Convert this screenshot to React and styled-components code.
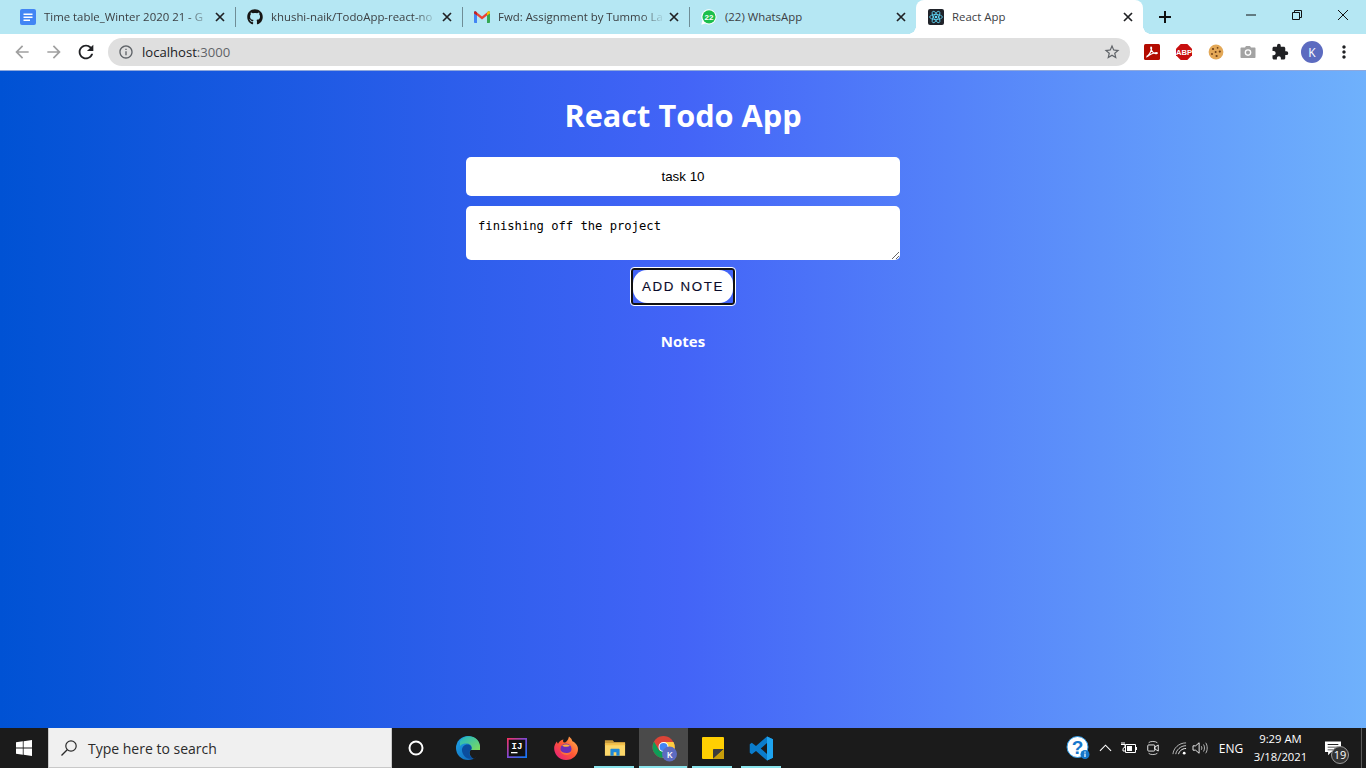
import React from "react";
import styled, { createGlobalStyle } from "styled-components";
import { FaGithub } from "react-icons/fa";
import { MdArrowBack, MdArrowForward, MdRefresh, MdInfoOutline, MdStarBorder, MdExtension, MdMoreVert } from "react-icons/md";

const Global = createGlobalStyle`
  html, body { margin: 0; padding: 0; height: 100%; overflow: hidden; }
  * { box-sizing: border-box; }
  body { font-family: "Open Sans", "Noto Sans", sans-serif; }
`;

const Page = styled.div`
  display: flex;
  flex-direction: column;
  width: 1366px;
  height: 768px;
  overflow: hidden;
`;

/* ---------- browser chrome ---------- */
const TabStrip = styled.div`
  display: flex;
  align-items: stretch;
  height: 34px;
  padding-left: 8px;
  background: #b5e7f3;
`;
const Tab = styled.div`
  position: relative;
  display: flex;
  align-items: center;
  gap: 8px;
  width: 227px;
  padding: 0 10px 0 12px;
  background: ${(p) => (p.$active ? "#ffffff" : "transparent")};
  border-radius: ${(p) => (p.$active ? "8px 8px 0 0" : "0")};
  &::after {
    content: "";
    display: ${(p) => (p.$sep ? "block" : "none")};
    position: absolute;
    right: -1px;
    top: 7px;
    width: 1px;
    height: 20px;
    background: #6f8d96;
  }
  ${(p) =>
    p.$active &&
    `
    &::before {
      content: "";
      position: absolute;
      left: -8px;
      bottom: 0;
      width: 8px;
      height: 8px;
      background: radial-gradient(circle 8px at 0 0, #b5e7f3 97%, #fff 100%);
    }
    &::after {
      display: block;
      top: auto;
      bottom: 0;
      right: -8px;
      width: 8px;
      height: 8px;
      background: radial-gradient(circle 8px at 8px 0, #b5e7f3 97%, #fff 100%);
    }
  `}
`;
const TabIcon = styled.span`
  display: flex;
  flex: none;
  width: 16px;
  height: 16px;
`;
const TabTitle = styled.span`
  flex: 1;
  min-width: 0;
  overflow: hidden;
  white-space: nowrap;
  font-size: 11.4px;
  line-height: 16px;
  color: #3c4043;
  ${(p) =>
    p.$fade &&
    `
    -webkit-mask-image: linear-gradient(to right, #000 calc(100% - 24px), transparent 100%);
    mask-image: linear-gradient(to right, #000 calc(100% - 24px), transparent 100%);
  `}
`;
const CloseGlyph = styled.svg`
  flex: none;
  width: 10px;
  height: 10px;
  margin-left: -4px;
`;
const NewTab = styled.div`
  display: flex;
  align-items: center;
  justify-content: center;
  width: 28px;
  margin-left: 8px;
`;
const Spacer = styled.div`
  flex: 1;
`;
const WindowButton = styled.div`
  display: flex;
  align-items: center;
  justify-content: center;
  width: 46px;
  height: 30px;
`;

const Toolbar = styled.div`
  display: flex;
  align-items: center;
  height: 36px;
  padding: 0 6px;
  background: #ffffff;
`;
const ToolButton = styled.div`
  display: flex;
  align-items: center;
  justify-content: center;
  flex: none;
  width: 32px;
  height: 28px;
  color: ${(p) => p.$color || "#202124"};
  font-size: ${(p) => p.$size || 20}px;
`;
const Omnibox = styled.div`
  display: flex;
  align-items: center;
  flex: 1;
  height: 28px;
  margin: 0 6px;
  padding: 0 9px 0 10px;
  border-radius: 14px;
  background: #dfdfdf;
`;
const Url = styled.span`
  flex: 1;
  margin-left: 8px;
  font-size: 13.1px;
  line-height: 20px;
  color: #202124;
  span {
    color: #5f6368;
  }
`;
const Avatar = styled.div`
  display: flex;
  align-items: center;
  justify-content: center;
  width: 22px;
  height: 22px;
  border-radius: 50%;
  background: #5c6bc0;
  color: #ffffff;
  font-size: 12px;
`;

/* ---------- app ---------- */
const Main = styled.main`
  display: flex;
  flex-direction: column;
  align-items: center;
  flex: 1;
  padding-top: 22px;
  border-top: 1px solid #8fa8dc;
  background: linear-gradient(to right, #0052d4, #4364f7, #6fb1fc);
`;
const Title = styled.h1`
  margin: 0 0 20px;
  font-size: 30.7px;
  line-height: 44px;
  font-weight: 700;
  color: #ffffff;
`;
const TitleInput = styled.input`
  display: block;
  width: 434px;
  height: 39px;
  padding: 0 12px;
  border: none;
  border-radius: 5px;
  outline: none;
  background: #ffffff;
  color: #000000;
  text-align: center;
  font-family: "Liberation Sans", Arial, sans-serif;
  font-size: 13.33px;
`;
const NoteArea = styled.textarea`
  display: block;
  width: 434px;
  height: 54px;
  margin-top: 10px;
  padding: 13px 12px 12px;
  border: none;
  border-radius: 5px;
  outline: none;
  background: #ffffff;
  color: #000000;
  font-family: "DejaVu Sans Mono", monospace;
  font-size: 12.17px;
  line-height: 15px;
`;
const FocusRing = styled.div`
  width: 106px;
  height: 39px;
  margin-top: 7px;
  padding: 2px;
  border: 1px solid #ffffff;
  border-radius: 4px;
  box-shadow: inset 0 0 0 2px #111111;
  background: #4364f7;
`;
const AddButton = styled.button`
  display: block;
  width: 100%;
  height: 100%;
  border: none;
  border-radius: 14px;
  background: #ffffff;
  color: #0a0a2a;
  font-family: "Liberation Sans", Arial, sans-serif;
  font-size: 13.33px;
  letter-spacing: 1.65px;
  -webkit-text-stroke: 0.15px #0a0a2a;
  padding: 0;
`;
const NotesHeading = styled.h2`
  margin: 25px 0 0;
  font-size: 15px;
  line-height: 20px;
  font-weight: 700;
  color: #ffffff;
`;

/* ---------- taskbar ---------- */
const Taskbar = styled.footer`
  display: flex;
  align-items: stretch;
  height: 40px;
  background: #1b1b1b;
`;
const StartButton = styled.div`
  display: flex;
  align-items: center;
  justify-content: center;
  width: 48px;
`;
const SearchBox = styled.div`
  display: flex;
  align-items: center;
  width: 344px;
  padding-left: 11px;
  background: #f0f0f0;
  border: 1px solid #c8c8c8;
  border-width: 0 1px 1px 1px;
  font-size: 14px;
  color: #2b2b2b;
  span {
    margin-left: 10px;
    padding-top: 2px;
  }
`;
const CortanaSlot = styled.div`
  display: flex;
  align-items: center;
  justify-content: center;
  width: 48px;
  margin-right: 3px;
`;
const AppSlot = styled.div`
  position: relative;
  display: flex;
  align-items: center;
  justify-content: center;
  width: 49px;
  background: ${(p) => (p.$focused ? "#4a4a4a" : "transparent")};
  &::after {
    content: "";
    display: ${(p) => (p.$running ? "block" : "none")};
    position: absolute;
    bottom: 0;
    left: ${(p) => (p.$focused ? "0" : "4px")};
    right: ${(p) => (p.$focused ? "1px" : "5px")};
    height: 2px;
    background: #8ae4ec;
  }
`;
const Tray = styled.div`
  display: flex;
  align-items: stretch;
  margin-right: 4px;
  color: #ffffff;
`;
const TraySlot = styled.div`
  position: relative;
  display: flex;
  align-items: center;
  justify-content: center;
  width: ${(p) => p.$w}px;
  font-size: 12px;
`;
const Clock = styled.div`
  font-size: 11.3px;
  line-height: 18px;
  text-align: center;
  white-space: nowrap;
`;
const Badge = styled.span`
  position: absolute;
  left: 23px;
  top: 18px;
  width: 18px;
  height: 18px;
  border-radius: 50%;
  border: 1px solid #9a9a9a;
  background: #333333;
  color: #ffffff;
  font-size: 11px;
  line-height: 16px;
  text-align: center;
`;
const DesktopEdge = styled.div`
  width: 1px;
  margin-left: 3px;
  background: #5a5a5a;
`;

const Close = ({ color = "#202124" }) => (
  <CloseGlyph viewBox="0 0 10 10">
    <path d="M1 1 9 9M9 1 1 9" stroke={color} strokeWidth="1.7" fill="none" />
  </CloseGlyph>
);

const DocsIcon = () => (
  <svg viewBox="0 0 16 16" width="16" height="16">
    <rect x="0" y="0" width="16" height="16" rx="2" fill="#4285f4" />
    <path d="M3.5 4.5h9v1.5h-9zM3.5 7.5h9V9h-9zM3.5 10.5h6.5V12H3.5z" fill="#fff" />
  </svg>
);
const GmailIcon = () => (
  <svg viewBox="0 0 16 16" width="16" height="16">
    <path d="M0 3.5 C0 2.4 1.2 1.9 2 2.6L3 3.4V14H1C.4 14 0 13.6 0 13z" fill="#4285f4" />
    <path d="M16 3.5 C16 2.4 14.8 1.9 14 2.6L13 3.4V14h2c.6 0 1-.4 1-1z" fill="#34a853" />
    <path d="M3 3.4 8 7.4 13 3.4V6.6L8 10.5 3 6.6z" fill="#ea4335" />
    <path d="M13 3.4 14 2.6C14.8 1.9 16 2.4 16 3.5V4.5L13 6.6z" fill="#fbbc04" />
    <path d="M0 3.5C0 2.4 1.2 1.9 2 2.6L3 3.4V6.6L0 4.5z" fill="#c5221f" />
  </svg>
);
const WhatsIcon = () => (
  <svg viewBox="0 0 16 16" width="16" height="16">
    <path d="M8 .2a7.6 7.6 0 0 0-6.6 11.4L.3 15.7l4.2-1.1A7.6 7.6 0 1 0 8 .2z" fill="#fff" />
    <circle cx="8" cy="7.8" r="6.6" fill="#1cbf4c" />
    <text x="8" y="10.6" textAnchor="middle" fontFamily="Liberation Sans" fontWeight="700" fontSize="8" fill="#fff">22</text>
  </svg>
);
const ReactIcon = () => (
  <svg viewBox="0 0 16 16" width="16" height="16">
    <rect width="16" height="16" rx="2" fill="#20232a" />
    <g fill="none" stroke="#61dafb" strokeWidth=".8">
      <ellipse cx="8" cy="8" rx="6.4" ry="2.5" />
      <ellipse cx="8" cy="8" rx="6.4" ry="2.5" transform="rotate(60 8 8)" />
      <ellipse cx="8" cy="8" rx="6.4" ry="2.5" transform="rotate(120 8 8)" />
    </g>
    <circle cx="8" cy="8" r="1.3" fill="#61dafb" />
  </svg>
);
const AcrobatIcon = () => (
  <svg viewBox="0 0 16 16" width="16" height="16">
    <rect width="16" height="16" rx="1.5" fill="#b30b00" />
    <path d="M2.6 12.6C4.6 11.5 6.6 8.3 7.4 5.5 7.9 3.4 7.2 2.6 6.8 3.2 6.2 4.6 8.6 8.6 10.3 9.3 11.6 9.9 13.6 9.6 13.3 8.9 12.8 8 8 9.2 5 11.2 3.6 12.1 2.6 13 3 13.2"
      fill="none" stroke="#fff" strokeWidth="1.2" />
  </svg>
);
const AbpIcon = () => (
  <svg viewBox="0 0 16 16" width="16" height="16">
    <path d="M4.7 0h6.6L16 4.7v6.6L11.3 16H4.7L0 11.3V4.7z" fill="#c80f0f" />
    <text x="8" y="10.8" textAnchor="middle" fontFamily="Liberation Sans" fontWeight="700" fontSize="7.6" fill="#fff">ABP</text>
  </svg>
);
const CookieIcon = () => (
  <svg viewBox="0 0 16 16" width="16" height="16">
    <circle cx="8" cy="8" r="7.4" fill="#e3a857" />
    <g fill="#6b3d16">
      <circle cx="5" cy="5" r="1.1" /><circle cx="9.6" cy="3.8" r=".9" /><circle cx="11.8" cy="7.6" r="1.1" />
      <circle cx="7.6" cy="8" r="1" /><circle cx="4" cy="10" r=".9" /><circle cx="8.6" cy="12" r="1.1" />
    </g>
  </svg>
);
const CameraIcon = () => (
  <svg viewBox="0 0 16 16" width="16" height="16">
    <path d="M1.5 3.5H5L6 2h4l1 1.5h3.5c.6 0 1 .4 1 1v8.5c0 .6-.4 1-1 1h-13c-.6 0-1-.4-1-1V4.500c0-.6.4-1 1-1z" fill="#a3a3a3" />
    <circle cx="8" cy="8.600" r="3.300" fill="#fff" />
    <circle cx="8" cy="8.600" r="2" fill="#a3a3a3" />
  </svg>
);
const WinLogo = () => (
  <svg viewBox="0 0 16 16" width="16" height="16">
    <path d="M0 2.300 6.800 1.300V7.600H0zM7.600 1.200 16 0V7.600H7.600zM0 8.400H6.800V14.700L0 13.700zM7.600 8.400H16V16L7.600 14.800z" fill="#fff" />
  </svg>
);
const SearchGlyph = () => (
  <svg viewBox="0 0 18 18" width="18" height="18">
    <circle cx="11" cy="7" r="5.200" fill="none" stroke="#2b2b2b" strokeWidth="1.200" />
    <path d="M7.200 10.800 1.500 16.500" stroke="#2b2b2b" strokeWidth="1.300" />
  </svg>
);
const Cortana = () => (
  <svg viewBox="0 0 16 16" width="16" height="16">
    <circle cx="8" cy="8" r="6.500" fill="none" stroke="#fff" strokeWidth="2" />
  </svg>
);
const EdgeIcon = () => (
  <svg viewBox="0 0 24 24" width="24" height="24">
    <defs>
      <linearGradient id="edgeA" x1="0" y1="0" x2="1" y2="1">
        <stop offset="0" stopColor="#1fb6c9" /><stop offset="1" stopColor="#7fdc5a" />
      </linearGradient>
      <linearGradient id="edgeB" x1="0" y1="0" x2="1" y2="1">
        <stop offset="0" stopColor="#1fa6e8" /><stop offset="1" stopColor="#0d5cb4" />
      </linearGradient>
    </defs>
    <circle cx="12" cy="12" r="12" fill="url(#edgeB)" />
    <path d="M4 5C7.500 -.5 16 -1.500 21 3.500 24 6.500 24.500 11 24 14H15C17 10.500 14.500 7.500 10.500 7.500 8 7.500 5.500 8 4 10z" fill="url(#edgeA)" />
    <path d="M6 15C5.500 10 10 7.500 13.500 9 16 10.300 16 13 15 14 12 16 13 20 17 22.500 11 24 7 20 6 15z" fill="#0b4d9e" />
    <path d="M15 14H24.200C24 18 21.500 21.500 17.500 22.800 13.500 20.500 12.500 16 15 14z" fill="#1b1b1b" />
  </svg>
);
const IdeaIcon = () => (
  <svg viewBox="0 0 20 20" width="20" height="20">
    <defs>
      <linearGradient id="ideaG" x1="0" y1="0" x2="1" y2="1">
        <stop offset="0" stopColor="#fe315d" /><stop offset=".5" stopColor="#7c4ad6" /><stop offset="1" stopColor="#087cfa" />
      </linearGradient>
    </defs>
    <rect width="20" height="20" fill="url(#ideaG)" />
    <rect x="1.700" y="1.700" width="16.600" height="16.600" fill="#111" />
    <text x="10" y="11" textAnchor="middle" fontFamily="Liberation Mono" fontWeight="700" fontSize="9" fill="#fff">IJ</text>
    <rect x="4" y="14" width="6.500" height="1.300" fill="#fff" />
  </svg>
);
const FirefoxIcon = () => (
  <svg viewBox="0 0 24 24" width="24" height="24">
    <defs>
      <linearGradient id="ffG" x1="0" y1="1" x2="1" y2="0">
        <stop offset="0" stopColor="#e31587" /><stop offset=".5" stopColor="#ff5634" /><stop offset="1" stopColor="#ffbd4f" />
      </linearGradient>
    </defs>
    <path d="M12 24A11.800 11.800 0 0 1 .3 10.500C1 8 2 6.500 3 5.500c0 1 .3 1.800 1 2.300C5 5.500 7 3.800 9.500 3.500c-.8 1.300-.5 2.500.5 3C11.500 7 14 5 15 .5c2 1.500 3 3 3.300 4.800C20 6 24 8.500 24 13c0 6-5 11-12 11z" fill="url(#ffG)" />
    <circle cx="12" cy="13" r="5.500" fill="#6b2fb8" />
    <path d="M8 9.500c2-1.500 6-1.500 8 0-1 1.200-2.500 1-4 1.300-1.200.2-2.500-.1-4-1.300z" fill="#ffb03a" />
    <path d="M6 14c1 4 5 6 8.500 4.700 2-.8 3.300-2.500 3.500-4.700-1 2-3 3.200-5.500 3C9.500 17 7.500 16 6 14z" fill="#ff7139" />
  </svg>
);
const ExplorerIcon = () => (
  <svg viewBox="0 0 24 24" width="22" height="22">
    <path d="M1 3.500h8.500L11 5.500h12V8H1z" fill="#c99a3a" />
    <path d="M1 7h22v13.500H1z" fill="#fcd76a" />
    <path d="M1 7.500h22V9H1z" fill="#f7bf45" />
    <path d="M7 20.500v-7c0-.5.3-.8.800-.8h8.400c.5 0 .8.300.8.800v7h-3.500v-4h-3v4z" fill="#1e88d8" />
  </svg>
);
const ChromeIcon = () => (
  <svg viewBox="0 0 30 30" width="30" height="30">
    <g transform="translate(3.500 3)">
      <circle cx="11" cy="11" r="11" fill="#db4437" />
      <path d="M1.500 5.500A11 11 0 0 0 10 22l5-8.200-8.200.9z" fill="#0f9d58" />
      <path d="M11 6h10a11 11 0 0 1-11 16l5.200-8.500z" fill="#ffcd40" />
      <circle cx="11" cy="11" r="5" fill="#fff" />
      <circle cx="11" cy="11" r="4" fill="#4285f4" />
    </g>
    <circle cx="20.500" cy="21" r="7.500" fill="#5c6bc0" />
    <text x="20.500" y="24.500" textAnchor="middle" fontFamily="Open Sans" fontWeight="600" fontSize="9" fill="#fff">K</text>
  </svg>
);
const StickyIcon = () => (
  <svg viewBox="0 0 22 22" width="22" height="22">
    <rect width="22" height="22" rx="1" fill="#ffcf02" />
    <path d="M11 22V13c0-.6.4-1 1-1H22z" fill="#3c3c3c" />
    <path d="M22 12V21c0 .6-.4 1-1 1H11z" fill="#c79d0a" />
  </svg>
);
const CodeIcon = () => (
  <svg viewBox="0 0 100 100" width="25" height="25">
    <path fillRule="evenodd" d="M72 2 96 13V87L72 98 28 60 11 73 3 67V33L11 27 28 40ZM72 28 47 50 72 72Z" fill="#0b7ccb" />
    <path d="M72 2 96 13V87L72 98Z" fill="#1ea3ef" />
  </svg>
);
const HelpIcon = () => (
  <svg viewBox="0 0 24 24" width="24" height="24">
    <circle cx="11.500" cy="11" r="10.500" fill="#fff" stroke="#2d9be8" strokeWidth="1" />
    <text x="11.500" y="17.500" textAnchor="middle" fontFamily="Liberation Sans" fontWeight="700" fontSize="19" fill="#1677cc">?</text>
    <circle cx="19" cy="18.500" r="4.500" fill="#1677cc" />
    <rect x="18.400" y="17.500" width="1.200" height="3.500" fill="#fff" />
    <rect x="18.400" y="15.500" width="1.200" height="1.200" fill="#fff" />
  </svg>
);
const Chevron = () => (
  <svg viewBox="0 0 14 8" width="13" height="8">
    <path d="M1 7 7 1 13 7" fill="none" stroke="#fff" strokeWidth="1.200" />
  </svg>
);
const BatteryIcon = () => (
  <svg viewBox="0 0 16 12" width="16" height="12">
    <path d="M4.500 2.500h10v8h-10z" fill="none" stroke="#fff" />
    <path d="M15 5h1v3h-1z" fill="#fff" />
    <path d="M6 4h5v5H6z" fill="#fff" />
    <path d="M1 0v2.500M3 0v2.500M0 2.500h4v2.500L2 6.500 2 9h2.500" stroke="#fff" fill="none" />
  </svg>
);
const MeetIcon = () => (
  <svg viewBox="0 0 16 18" width="14" height="16">
    <path d="M3 3C4.500 1 11 1 13 3M3 15c1.500 2 8 2 10 0" fill="none" stroke="#ddd" />
    <rect x="2" y="5.500" width="8" height="7" rx="1" fill="none" stroke="#fff" />
    <path d="M10 8l4-2.500v7L10 10z" fill="none" stroke="#fff" />
  </svg>
);
const WifiIcon = () => (
  <svg viewBox="0 0 16 16" width="15" height="15">
    <g fill="none" stroke="#fff">
      <path d="M1 14C1.500 8 7 2 15 2" opacity=".7" />
      <path d="M4 14C4.500 10 9 5 15 5" opacity=".8" />
      <path d="M7 14C7.500 11.500 10 8 15 8" />
    </g>
    <circle cx="13" cy="13" r="1.500" fill="#fff" />
  </svg>
);
const VolumeIcon = () => (
  <svg viewBox="0 0 18 16" width="16" height="14">
    <path d="M1 5.500h3L8 2v12L4 10.500H1z" fill="none" stroke="#fff" />
    <path d="M10.500 6c.8 1 .8 3 0 4M13 4c1.500 2 1.500 6 0 8M15.500 2c2.300 3 2.300 9 0 12" fill="none" stroke="#ccc" />
  </svg>
);
const NoteBubble = () => (
  <svg viewBox="0 0 18 16" width="16" height="15">
    <path d="M0 0h18v12H7L3.500 15.500V12H0z" fill="#fff" />
    <path d="M3 3h12v1H3zM3 6h12v1H3zM3 9h8v1H3z" fill="#222" />
  </svg>
);

const tabs = [
  { icon: <DocsIcon />, title: "Time table_Winter 2020 21 - G", fade: true, sep: true },
  { icon: <FaGithub size={16} color="#161614" />, title: "khushi-naik/TodoApp-react-no", fade: true, sep: true },
  { icon: <GmailIcon />, title: "Fwd: Assignment by Tummo La", fade: true, sep: true },
  { icon: <WhatsIcon />, title: "(22) WhatsApp" },
  { icon: <ReactIcon />, title: "React App", active: true },
];

const apps = [
  { icon: <EdgeIcon /> },
  { icon: <IdeaIcon /> },
  { icon: <FirefoxIcon /> },
  { icon: <ExplorerIcon />, running: true },
  { icon: <ChromeIcon />, running: true, focused: true },
  { icon: <StickyIcon />, running: true },
  { icon: <CodeIcon />, running: true },
];

export default function App() {
  return (
    <Page>
      <Global />
      <TabStrip>
        {tabs.map((t) => (
          <Tab key={t.title} $active={t.active} $sep={t.sep}>
            <TabIcon>{t.icon}</TabIcon>
            <TabTitle $fade={t.fade}>{t.title}</TabTitle>
            <Close />
          </Tab>
        ))}
        <NewTab>
          <svg viewBox="0 0 12 12" width="12" height="12">
            <path d="M6 0v12M0 6h12" stroke="#111" strokeWidth="2" />
          </svg>
        </NewTab>
        <Spacer />
        <WindowButton>
          <svg viewBox="0 0 10 10" width="10" height="10"><path d="M0 5h10" stroke="#111" /></svg>
        </WindowButton>
        <WindowButton>
          <svg viewBox="0 0 10 10" width="10" height="10">
            <path d="M2.500 2.500V.5h7v7h-2M.5 2.500h7v7h-7z" fill="none" stroke="#111" />
          </svg>
        </WindowButton>
        <WindowButton>
          <svg viewBox="0 0 10 10" width="10" height="10"><path d="M0 0 10 10M10 0 0 10" stroke="#111" /></svg>
        </WindowButton>
      </TabStrip>

      <Toolbar>
        <ToolButton $color="#a0a0a0" $size={20}><MdArrowBack /></ToolButton>
        <ToolButton $color="#a0a0a0" $size={20}><MdArrowForward /></ToolButton>
        <ToolButton $size={22}><MdRefresh /></ToolButton>
        <Omnibox>
          <MdInfoOutline size={16} color="#5f6368" />
          <Url>localhost<span>:3000</span></Url>
          <MdStarBorder size={18} color="#5f6368" />
        </Omnibox>
        <ToolButton><AcrobatIcon /></ToolButton>
        <ToolButton><AbpIcon /></ToolButton>
        <ToolButton><CookieIcon /></ToolButton>
        <ToolButton><CameraIcon /></ToolButton>
        <ToolButton $size={18}><MdExtension /></ToolButton>
        <ToolButton><Avatar>K</Avatar></ToolButton>
        <ToolButton><MdMoreVert /></ToolButton>
      </Toolbar>

      <Main>
        <Title>React Todo App</Title>
        <TitleInput readOnly value="task 10" />
        <NoteArea readOnly value="finishing off the project" />
        <FocusRing><AddButton>ADD NOTE</AddButton></FocusRing>
        <NotesHeading>Notes</NotesHeading>
      </Main>

      <Taskbar>
        <StartButton><WinLogo /></StartButton>
        <SearchBox>
          <SearchGlyph />
          <span>Type here to search</span>
        </SearchBox>
        <CortanaSlot><Cortana /></CortanaSlot>
        {apps.map((a, i) => (
          <AppSlot key={i} $running={a.running} $focused={a.focused}>{a.icon}</AppSlot>
        ))}
        <Spacer />
        <Tray>
          <TraySlot $w={26}><HelpIcon /></TraySlot>
          <TraySlot $w={28}><Chevron /></TraySlot>
          <TraySlot $w={20}><BatteryIcon /></TraySlot>
          <TraySlot $w={28}><MeetIcon /></TraySlot>
          <TraySlot $w={24}><WifiIcon /></TraySlot>
          <TraySlot $w={18}><VolumeIcon /></TraySlot>
          <TraySlot $w={44}>ENG</TraySlot>
          <TraySlot $w={55}><Clock>9:29 AM<br />3/18/2021</Clock></TraySlot>
          <TraySlot $w={50}><NoteBubble /><Badge>19</Badge></TraySlot>
          <DesktopEdge />
        </Tray>
      </Taskbar>
    </Page>
  );
}
